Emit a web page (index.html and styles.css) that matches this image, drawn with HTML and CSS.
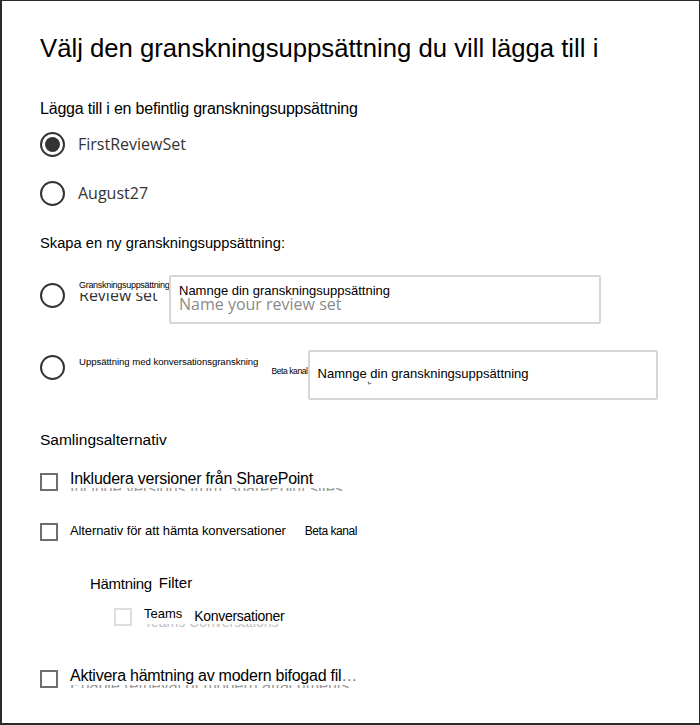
FILE: index.html
```html
<!DOCTYPE html>
<html lang="sv">
<head>
<meta charset="utf-8">
<title>Välj granskningsuppsättning</title>
<link rel="stylesheet" href="styles.css">
</head>
<body>
<div class="frame">
  <h1 class="title">Välj den granskningsuppsättning du vill lägga till i</h1>

  <div class="section-label sl-existing">Lägga till i en befintlig granskningsuppsättning</div>
  <div class="radio-row r1"><span class="radio checked"></span><span class="radio-text">FirstReviewSet</span></div>
  <div class="radio-row r2"><span class="radio"></span><span class="radio-text">August27</span></div>

  <div class="section-label sl-new">Skapa en ny granskningsuppsättning:</div>

  <div class="new-row n1">
    <span class="radio"></span>
    <div class="stack mini1">
      <span class="ghost-review">Review set</span>
      <span class="tiny tiny1">Granskningsuppsättning</span>
    </div>
    <div class="input-box ib1">
      <span class="input-overlay">Namnge din granskningsuppsättning</span>
      <span class="placeholder">Name your review set</span>
    </div>
  </div>

  <div class="new-row n2">
    <span class="radio"></span>
    <span class="tiny tiny2">Uppsättning med konversationsgranskning</span>
    <span class="tiny beta-small">Beta kanal</span>
    <div class="input-box ib2">
      <span class="input-overlay ov2">Namnge din granskningsuppsättning</span>
      <span class="tick"></span>
    </div>
  </div>

  <div class="section-label sl-coll">Samlingsalternativ</div>

  <div class="check-row c1">
    <span class="checkbox"></span>
    <div class="stack clip clip-big">
      <span class="ghost ghost-big">Include versions from SharePoint sites</span>
      <span class="overlay big">Inkludera versioner från SharePoint</span>
    </div>
  </div>

  <div class="check-row c2">
    <span class="checkbox"></span>
    <span class="overlay small">Alternativ för att hämta konversationer</span>
    <span class="overlay beta">Beta kanal</span>
  </div>

  <div class="sub-head">
    <span class="sub-a">Hämtning</span><span class="sub-b">Filter</span>
  </div>

  <div class="check-row c3">
    <span class="checkbox light"></span>
    <div class="stack clip clip-small">
      <span class="ghost ghost-small">Teams Conversations</span>
      <span class="overlay teams-line"><span class="teams">Teams</span><span class="konv">Konversationer</span></span>
    </div>
  </div>

  <div class="check-row c4">
    <span class="checkbox"></span>
    <div class="stack clip clip-big">
      <span class="ghost ghost-big">Enable retrieval of modern attachments…</span>
      <span class="overlay big">Aktivera hämtning av modern bifogad fil<span class="dots">…</span></span>
    </div>
  </div>
</div>
</body>
</html>
```

FILE: styles.css
```css
* { box-sizing: border-box; }
html, body { margin: 0; padding: 0; background: #fff; }
body { font-family: "Liberation Sans", Arial, sans-serif; color: #000; }

.frame {
  width: 700px;
  height: 725px;
  border-style: solid;
  border-color: #2b2b2b;
  border-width: 1px 1px 2px 2px;
  padding: 0 0 0 38px;
  overflow: hidden;
}

.title {
  margin: 32px 0 0 0;
  font-weight: normal;
  font-size: 25.7px;
  line-height: 30px;
}

.section-label { font-size: 15.5px; line-height: 18px; }
.sl-existing { margin-top: 37px; font-size: 16px; letter-spacing: -0.2px; }
.sl-new { margin-top: 28px; font-size: 14.7px; }
.sl-coll { margin-top: 31px; }

.radio-row { display: flex; align-items: center; height: 26px; }
.r1 { margin-top: 13px; }
.r2 { margin-top: 23px; }

.radio {
  width: 25px;
  height: 25px;
  border: 2px solid #333;
  border-radius: 50%;
  flex: none;
  display: flex;
  align-items: center;
  justify-content: center;
}
.radio.checked::after {
  content: "";
  width: 15px;
  height: 15px;
  border-radius: 50%;
  background: #333;
}
.radio-text {
  margin-left: 13px;
  font-family: "Open Sans", "Noto Sans", sans-serif;
  font-size: 16px;
  color: #333;
}

.new-row { display: flex; align-items: flex-start; }
.n1 { margin-top: 23px; }
.n2 { margin-top: 26px; }
.n1 > .radio { margin-top: 8px; }
.n2 > .radio { margin-top: 5px; }

.stack { display: grid; }
.stack > * { grid-area: 1 / 1; }
.clip { overflow: hidden; }

.mini1 { margin-left: 14px; width: 92px; margin-top: 5px; }
.tiny { font-size: 9px; line-height: 11px; align-self: start; white-space: nowrap; }
.tiny1 { background: #fff; letter-spacing: -0.3px; height: 13px; }
.ghost-review {
  font-family: "Open Sans", "Noto Sans", sans-serif;
  font-size: 16px;
  line-height: 20px;
  color: #333;
  margin-top: 5px;
  white-space: nowrap;
}

.input-box {
  border: 2px solid #d6d6d6;
  border-radius: 2px;
  display: flex;
  flex-direction: column;
}
.ib1 { width: 432px; height: 49px; margin-left: -2px; padding: 6px 0 0 8px; }
.ib2 { width: 350px; height: 50px; margin-left: 0; padding: 14px 0 0 8px; position: relative; }

.input-overlay { font-size: 13px; line-height: 15px; white-space: nowrap; }
.placeholder {
  font-family: "Open Sans", "Noto Sans", sans-serif;
  font-size: 16px;
  line-height: 17px;
  color: #8a8a8a;
  margin-top: -2px;
}
.tick {
  position: absolute;
  left: 58px;
  top: 29px;
  width: 3px;
  height: 3px;
  border-left: 1px solid #777;
  border-bottom: 1px solid #777;
  transform: rotate(-20deg);
}

.tiny2 { font-size: 9.6px; margin-left: 14px; margin-top: 6px; letter-spacing: -0.05px; }
.beta-small { font-size: 8.5px; margin-left: 13px; margin-top: 16px; letter-spacing: -0.4px; }

.check-row { display: flex; align-items: flex-start; }
.c1 { margin-top: 24px; }
.c2 { margin-top: 32px; }
.c3 { margin-top: 15px; padding-left: 74px; }
.c4 { margin-top: 40px; }

.checkbox {
  width: 18px;
  height: 18px;
  border: 2px solid #6e6e6e;
  flex: none;
}
.checkbox.light { border-color: #dedede; }

.c1 .stack, .c4 .stack { margin-left: 12px; margin-top: -3px; }
.clip-big { height: 21px; }
.clip-small { height: 24px; }
.overlay { align-self: start; background: #fff; white-space: nowrap; }
.big { font-size: 16px; line-height: 18px; letter-spacing: -0.25px; }
.ghost { align-self: start; color: #9a9a9a; white-space: nowrap; }
.ghost-big { font-size: 16px; line-height: 18px; margin-top: 10px; }
.dots { color: #777; }

.small { font-size: 13px; line-height: 16px; margin-left: 12px; letter-spacing: -0.1px; }
.beta { font-size: 12px; line-height: 16px; margin-left: 19px; letter-spacing: -0.45px; }

.sub-head { margin-top: 33px; padding-left: 50px; display: flex; align-items: flex-start; }
.sub-a { font-size: 15px; line-height: 18px; letter-spacing: -0.3px; margin-top: 1px; }
.sub-b { font-size: 15px; line-height: 18px; margin-left: 7px; }

.c3 .stack { margin-left: 12px; margin-top: -2px; }
.teams-line { display: flex; align-items: flex-start; font-size: 13px; line-height: 16px; padding-right: 4px; }
.konv { margin-left: 12px; margin-top: 2px; font-size: 14px; letter-spacing: -0.3px; }
.ghost-small { font-size: 14px; line-height: 16px; margin-top: 8px; color: #c0c0c0; }
```
